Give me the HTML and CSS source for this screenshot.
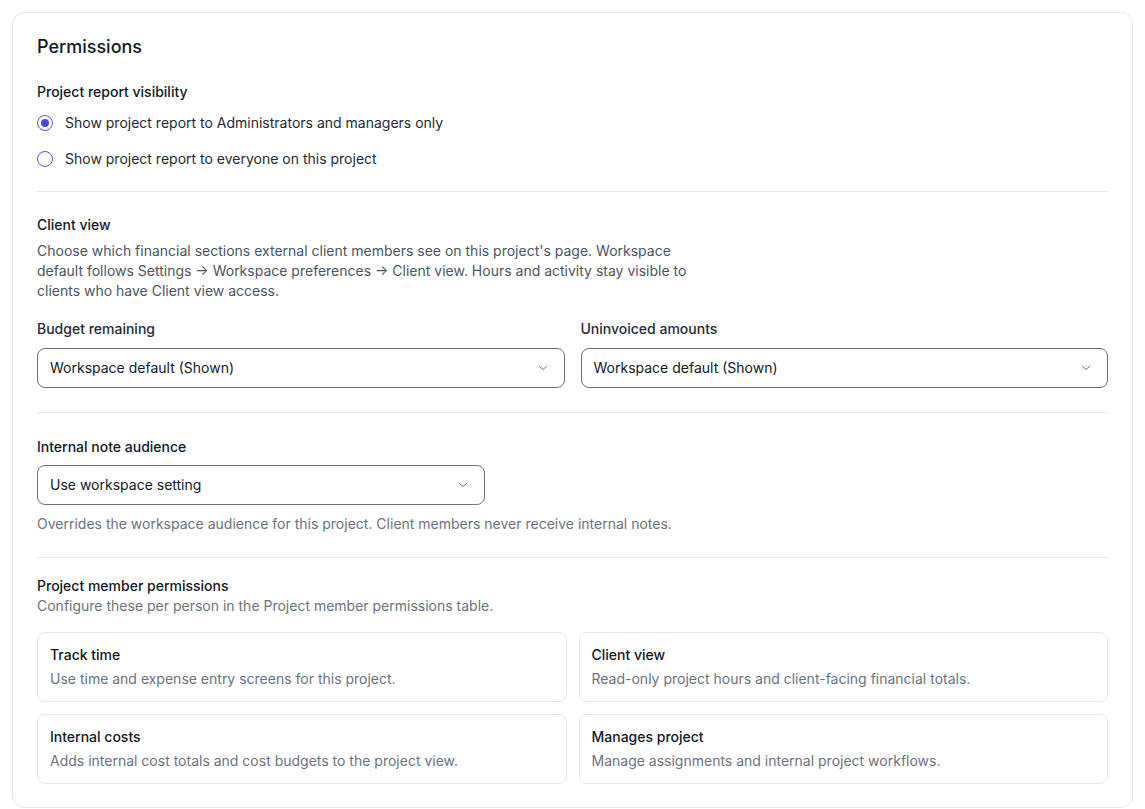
FILE: index.html
```html
<!DOCTYPE html>
<html lang="en">
<head>
<meta charset="utf-8">
<title>Permissions</title>
<link rel="stylesheet" href="styles.css">
</head>
<body>
<section class="card">
  <h2 class="card-title">Permissions</h2>

  <div class="section section-first">
    <div class="label">Project report visibility</div>
    <div class="radios">
      <label class="radio-row">
        <span class="radio checked"></span>
        <span class="radio-text">Show project report to Administrators and managers only</span>
      </label>
      <label class="radio-row">
        <span class="radio"></span>
        <span class="radio-text">Show project report to everyone on this project</span>
      </label>
    </div>
  </div>

  <div class="section section-client">
    <div class="label">Client view</div>
    <p class="desc desc-wide">Choose which financial sections external client members see on this project's page. Workspace default follows Settings → Workspace preferences → Client view. Hours and activity stay visible to clients who have Client view access.</p>
    <div class="field-grid">
      <div class="field">
        <div class="label field-label">Budget remaining</div>
        <div class="select">
          <span>Workspace default (Shown)</span>
          <svg class="chev" width="10" height="6" viewBox="0 0 10 6"><path d="M1.5 1.5l3.5 3 3.5-3" fill="none" stroke="#6b7280" stroke-width="1" stroke-linecap="round" stroke-linejoin="round"/></svg>
        </div>
      </div>
      <div class="field">
        <div class="label field-label">Uninvoiced amounts</div>
        <div class="select">
          <span>Workspace default (Shown)</span>
          <svg class="chev" width="10" height="6" viewBox="0 0 10 6"><path d="M1.5 1.5l3.5 3 3.5-3" fill="none" stroke="#6b7280" stroke-width="1" stroke-linecap="round" stroke-linejoin="round"/></svg>
        </div>
      </div>
    </div>
  </div>

  <div class="section section-note">
    <div class="label field-label-b">Internal note audience</div>
    <div class="select select-narrow">
      <span>Use workspace setting</span>
      <svg class="chev" width="10" height="6" viewBox="0 0 10 6"><path d="M1.5 1.5l3.5 3 3.5-3" fill="none" stroke="#6b7280" stroke-width="1" stroke-linecap="round" stroke-linejoin="round"/></svg>
    </div>
    <p class="help">Overrides the workspace audience for this project. Client members never receive internal notes.</p>
  </div>

  <div class="section section-last">
    <div class="label">Project member permissions</div>
    <p class="desc desc-tight">Configure these per person in the Project member permissions table.</p>
    <div class="perm-grid">
      <div class="perm">
        <div class="perm-title">Track time</div>
        <div class="perm-desc">Use time and expense entry screens for this project.</div>
      </div>
      <div class="perm">
        <div class="perm-title">Client view</div>
        <div class="perm-desc">Read-only project hours and client-facing financial totals.</div>
      </div>
      <div class="perm">
        <div class="perm-title">Internal costs</div>
        <div class="perm-desc">Adds internal cost totals and cost budgets to the project view.</div>
      </div>
      <div class="perm">
        <div class="perm-title">Manages project</div>
        <div class="perm-desc">Manage assignments and internal project workflows.</div>
      </div>
    </div>
  </div>
</section>
</body>
</html>
```

FILE: styles.css
```css
* { box-sizing: border-box; }
html, body { margin: 0; padding: 0; background: #ffffff; }
body {
  padding: 12px;
  font-family: Inter, "Noto Sans", "Liberation Sans", sans-serif;
  font-size: 14px;
  line-height: 20px;
  color: #111827;
}
.card {
  border: 1px solid #e5e7eb;
  border-radius: 12px;
  background: #fff;
  padding: 22px 24px 23px;
}
.card-title {
  margin: 0;
  font-size: 18px;
  line-height: 24px;
  font-weight: 500;
  color: #111827;
}
.section {
  padding: 24px 0 24px;
  border-bottom: 1px solid #e5e7eb;
}
.section-first { padding-top: 23px; padding-bottom: 22px; }
.section-client { padding-top: 23px; }
.section-note { padding-top: 24px; padding-bottom: 23px; }
.section-last { border-bottom: none; padding-top: 18px; padding-bottom: 0; }
.label {
  font-weight: 500;
  color: #111827;
}
.radios {
  margin-top: 11px;
  display: flex;
  flex-direction: column;
  gap: 16px;
}
.radio-row {
  display: flex;
  align-items: center;
  gap: 12px;
  height: 20px;
}
.radio {
  width: 16px;
  height: 16px;
  border-radius: 50%;
  border: 1.5px solid #5b50e8;
  background: #fff;
  display: flex;
  align-items: center;
  justify-content: center;
  flex: none;
}
.radio.checked::after {
  content: "";
  width: 8px;
  height: 8px;
  border-radius: 50%;
  background: #4f46e5;
}
.radio-text { color: #1f2937; }
.desc {
  margin: 6px 0 0;
  color: #4b5563;
}
.desc-wide { max-width: 672px; }
.desc-tight { margin-top: 0; color: #6b7280; }
.field-grid {
  margin-top: 18px;
  display: grid;
  grid-template-columns: 1fr 1fr;
  gap: 16px;
}
.field-label { margin-bottom: 9px; color: #1f2937; }
.field-label-b { margin-bottom: 8px; }
.select {
  height: 40px;
  border: 1px solid #6b7280;
  border-radius: 8px;
  padding: 0 16px 0 12px;
  display: flex;
  align-items: center;
  justify-content: space-between;
  color: #111827;
  background: #fff;
}
.select-narrow { width: 448px; }
.chev { flex: none; }
.help {
  margin: 9px 0 0;
  color: #6b7280;
}
.perm-grid {
  margin-top: 16px;
  display: grid;
  grid-template-columns: 1fr 1fr;
  gap: 12px;
}
.perm {
  border: 1px solid #e5e7eb;
  border-radius: 8px;
  padding: 12px;
}
.perm-title {
  font-weight: 500;
  color: #111827;
}
.perm-desc {
  margin-top: 4px;
  color: #6b7280;
}
```
